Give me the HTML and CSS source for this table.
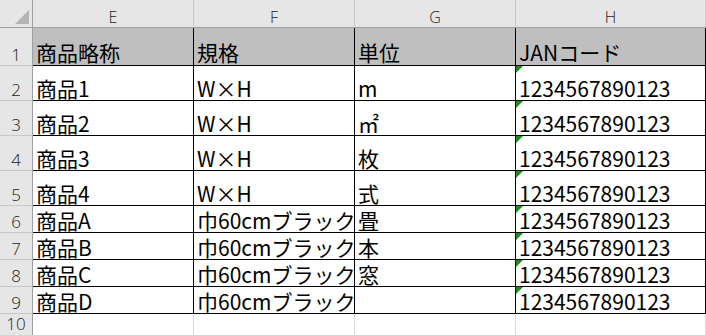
FILE: index.html
```html
<!DOCTYPE html>
<html lang="ja">
<head>
<meta charset="utf-8">
<title>Sheet</title>
<link rel="stylesheet" href="styles.css">
</head>
<body>
<div class="sheet">
  <div class="corner"><svg class="corner-tri" width="14" height="14" viewBox="0 0 14 14"><polygon points="14,0 14,14 0,14" fill="#b4b4b4"/></svg></div>
  <div class="colhead">E</div>
  <div class="colhead">F</div>
  <div class="colhead">G</div>
  <div class="colhead">H</div>

  <div class="rowhead">1</div>
  <div class="cell hdr">商品略称</div>
  <div class="cell hdr">規格</div>
  <div class="cell hdr">単位</div>
  <div class="cell hdr">JANコード</div>

  <div class="rowhead">2</div>
  <div class="cell">商品1</div>
  <div class="cell">W×H</div>
  <div class="cell">m</div>
  <div class="cell flag">1234567890123</div>

  <div class="rowhead">3</div>
  <div class="cell">商品2</div>
  <div class="cell">W×H</div>
  <div class="cell">㎡</div>
  <div class="cell flag">1234567890123</div>

  <div class="rowhead">4</div>
  <div class="cell">商品3</div>
  <div class="cell">W×H</div>
  <div class="cell">枚</div>
  <div class="cell flag">1234567890123</div>

  <div class="rowhead">5</div>
  <div class="cell">商品4</div>
  <div class="cell">W×H</div>
  <div class="cell">式</div>
  <div class="cell flag">1234567890123</div>

  <div class="rowhead">6</div>
  <div class="cell">商品A</div>
  <div class="cell">巾60cmブラック</div>
  <div class="cell">畳</div>
  <div class="cell flag">1234567890123</div>

  <div class="rowhead">7</div>
  <div class="cell">商品B</div>
  <div class="cell">巾60cmブラック</div>
  <div class="cell">本</div>
  <div class="cell flag">1234567890123</div>

  <div class="rowhead">8</div>
  <div class="cell">商品C</div>
  <div class="cell">巾60cmブラック</div>
  <div class="cell">窓</div>
  <div class="cell flag">1234567890123</div>

  <div class="rowhead">9</div>
  <div class="cell">商品D</div>
  <div class="cell">巾60cmブラック</div>
  <div class="cell"></div>
  <div class="cell flag">1234567890123</div>

  <div class="rowhead open">10</div>
  <div class="blank"></div>
  <div class="blank"></div>
  <div class="blank"></div>
  <div class="blank"></div>
</div>
</body>
</html>
```
FILE: styles.css
```css
html, body {
  margin: 0;
  padding: 0;
  background: #ffffff;
  overflow: hidden;
}

.sheet {
  display: grid;
  grid-template-columns: 33px 161px 161px 161px 190px;
  grid-template-rows: 28px 38px 35px 35px 35px 35px 27px 27px 27px 27px 21px;
  width: 706px;
}

.sheet > div {
  box-sizing: border-box;
}

.corner {
  background: #e6e6e6;
  border-right: 1px solid #a0a0a0;
  border-bottom: 1px solid #a0a0a0;
  display: flex;
  align-items: flex-end;
  justify-content: flex-end;
  padding: 0 3px 3px 0;
}

.corner-tri {
  display: block;
}

.colhead {
  background: #e6e6e6;
  border-right: 1px solid #c8c8c8;
  border-bottom: 1px solid #a0a0a0;
  display: flex;
  align-items: flex-end;
  justify-content: center;
  font-family: "Open Sans", "Liberation Sans", sans-serif;
  font-weight: 300;
  font-size: 16px;
  line-height: 1;
  color: #222222;
  padding-bottom: 2px;
}

.rowhead {
  background: #e6e6e6;
  border-right: 1px solid #a0a0a0;
  border-bottom: 1px solid #c8c8c8;
  display: flex;
  align-items: flex-end;
  justify-content: center;
  font-family: "Open Sans", "Liberation Sans", sans-serif;
  font-weight: 300;
  font-size: 17px;
  line-height: 1;
  color: #222222;
  padding-bottom: 2px;
}

.rowhead.open {
  border-bottom: none;
  padding-bottom: 3px;
}

.cell {
  position: relative;
  border-right: 1px solid #000000;
  border-bottom: 1px solid #000000;
  display: flex;
  align-items: flex-end;
  padding: 0 0 1px 3px;
  font-family: "Noto Sans CJK JP", "Noto Sans", sans-serif;
  font-size: 21px;
  line-height: 1;
  color: #000000;
  white-space: nowrap;
}

.hdr {
  background: #bfbfbf;
  padding-bottom: 2px;
}

.flag::before {
  content: "";
  position: absolute;
  left: 0;
  top: 0;
  width: 0;
  height: 0;
  border-top: 7px solid #1f8a1f;
  border-right: 7px solid transparent;
}

.blank {
  border-right: 1px solid #d9d9d9;
}
```
